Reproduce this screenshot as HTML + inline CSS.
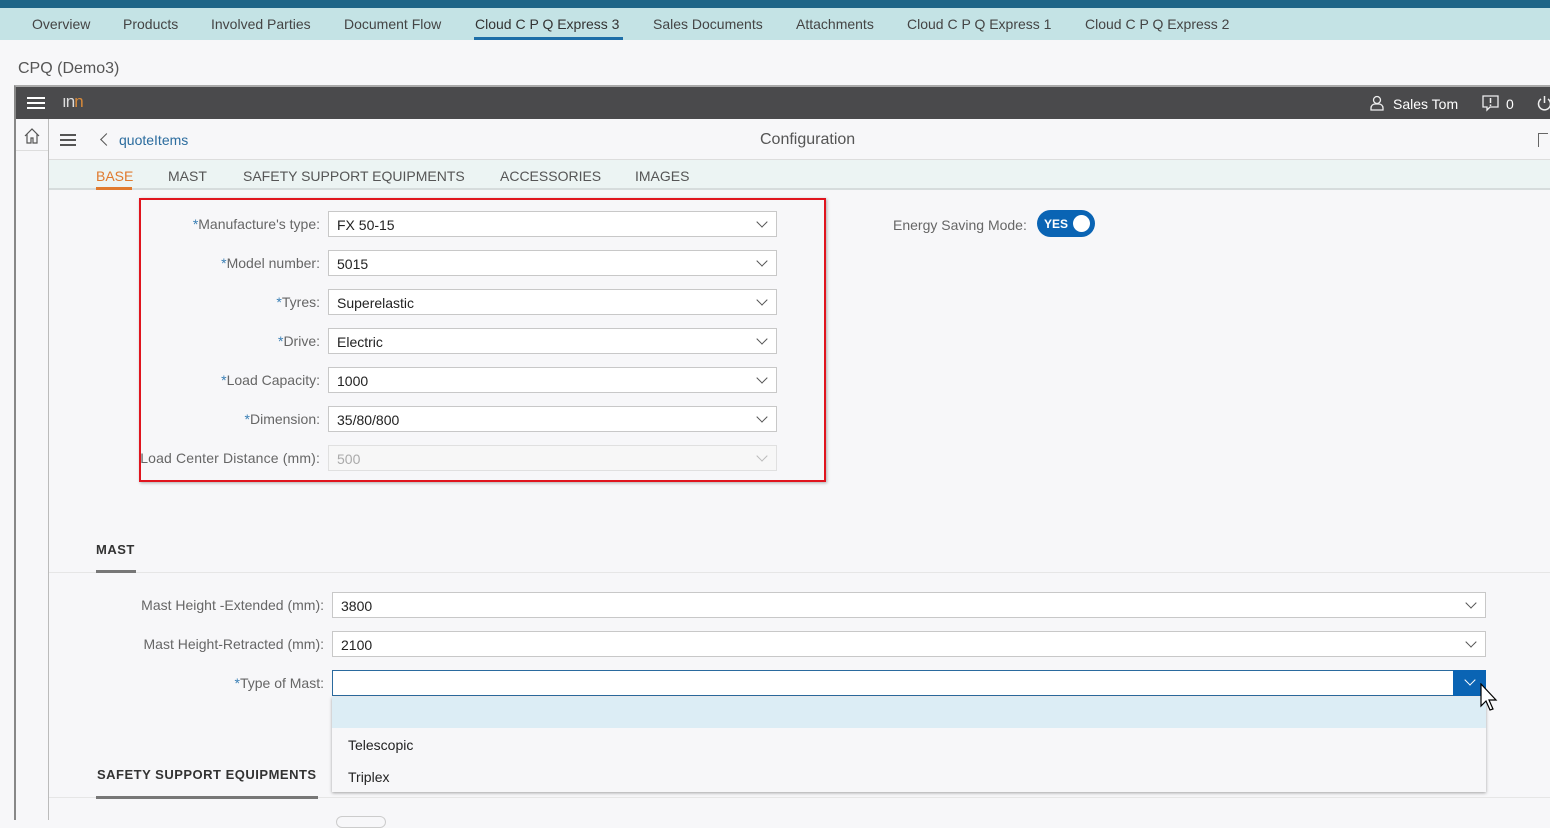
<!DOCTYPE html>
<html><head><meta charset="utf-8"><style>
*{box-sizing:border-box;margin:0;padding:0}
body{width:1550px;height:820px;overflow:hidden;background:#f7f7f9;font-family:"Liberation Sans",Arial,sans-serif;position:relative;color:#333}
.a{position:absolute}
.nav{left:0;top:0;width:1550px;height:8px;background:#1e6587}
.nav2{left:0;top:8px;width:1550px;height:32px;background:#c4e3e5;font-size:14px;color:#444}
.nav2 span{position:absolute;top:8px}
.lbl{font-size:14px;color:#666;text-align:right;white-space:nowrap}
.lbl b{color:#3a7fb5;font-weight:normal}
.inp{height:26px;border:1px solid #c8c8c8;background:#fff;font-size:14px;color:#222;padding:5px 8px}
.chev{position:absolute;right:10px;top:6px;width:8px;height:8px;border-right:1.3px solid #555;border-bottom:1.3px solid #555;transform:rotate(45deg)}
</style></head><body>
<div class="a nav"></div>
<div class="a nav2">
<span style="left:32px">Overview</span><span style="left:123px">Products</span><span style="left:211px">Involved Parties</span><span style="left:344px">Document Flow</span><span style="left:475px;color:#333">Cloud C P Q Express 3</span><span style="left:653px">Sales Documents</span><span style="left:796px">Attachments</span><span style="left:907px">Cloud C P Q Express 1</span><span style="left:1085px">Cloud C P Q Express 2</span>
<div class="a" style="left:474px;top:29px;width:149px;height:3px;background:#1e6fa8"></div>
</div>
<div class="a" style="left:18px;top:60px;font-size:16px;color:#555">CPQ (Demo3)</div>
<div class="a" style="left:14px;top:85px;width:1536px;height:735px;border-left:2px solid #888;border-top:2px solid #aaa"></div>
<div class="a" style="left:16px;top:87px;width:1534px;height:32px;background:#4a4a4c"></div>
<div class="a" style="left:27px;top:97px;width:18px;height:2px;background:#fff;box-shadow:0 5px 0 #fff,0 10px 0 #fff"></div>
<div class="a" style="left:62px;top:92px;font-size:17px;color:#ddd;letter-spacing:-1px">ın<span style="color:#d88a3a">n</span></div>
<svg class="a" style="left:1370px;top:95px" width="14" height="16"><circle cx="7" cy="5" r="3.5" fill="none" stroke="#eee" stroke-width="1.3"/><path d="M1 15v-2a4 4 0 0 1 4-4h4a4 4 0 0 1 4 4v2z" fill="none" stroke="#eee" stroke-width="1.3"/></svg>
<div class="a" style="left:1393px;top:96px;font-size:14px;color:#fff">Sales Tom</div>
<svg class="a" style="left:1482px;top:95px" width="18" height="17"><path d="M1 1h15v11h-8l-3 3v-3H1z" fill="none" stroke="#eee" stroke-width="1.3"/><path d="M8.5 3v5M8.5 9.5v1.5" stroke="#eee" stroke-width="1.5"/></svg>
<div class="a" style="left:1506px;top:96px;font-size:14px;color:#fff">0</div>
<svg class="a" style="left:1537px;top:94px" width="14" height="18"><path d="M4 5a6 6 0 1 0 7 0" fill="none" stroke="#eee" stroke-width="1.5"/><path d="M7.5 2v7" stroke="#eee" stroke-width="1.5"/></svg>
<div class="a" style="left:48px;top:119px;width:1px;height:701px;background:#bbb"></div>
<div class="a" style="left:16px;top:150px;width:32px;height:1px;background:#ddd"></div>
<svg class="a" style="left:23px;top:127px" width="18" height="18"><path d="M2 9L9 2l7 7M4 7v9h4v-5h2v5h4V7" fill="none" stroke="#555" stroke-width="1.2"/></svg>
<div class="a" style="left:49px;top:159px;width:1501px;height:1px;background:#ddd"></div>
<div class="a" style="left:60px;top:134px;width:16px;height:2px;background:#555;box-shadow:0 5px 0 #555,0 10px 0 #555"></div>
<div class="a" style="left:102px;top:135px;width:9px;height:9px;border-left:1.6px solid #555;border-bottom:1.6px solid #555;transform:rotate(45deg)"></div>
<div class="a" style="left:119px;top:132px;font-size:14px;color:#2b6c9e">quoteItems</div>
<div class="a" style="left:760px;top:131px;font-size:16px;color:#555">Configuration</div>
<div class="a" style="left:1538px;top:133px;width:10px;height:14px;border-left:1px solid #666;border-top:1px solid #666"></div>
<div class="a" style="left:49px;top:160px;width:1501px;height:30px;background:#ecf4f3;border-bottom:2px solid #d6dcdc;font-size:14px;color:#555">
<span class="a" style="left:47px;top:8px;color:#e07a2e">BASE</span><span class="a" style="left:119px;top:8px">MAST</span><span class="a" style="left:194px;top:8px">SAFETY SUPPORT EQUIPMENTS</span><span class="a" style="left:451px;top:8px">ACCESSORIES</span><span class="a" style="left:586px;top:8px">IMAGES</span>
<div class="a" style="left:47px;top:27px;width:36px;height:3px;background:#e07a2e"></div>
</div>

<div class="a lbl" style="left:100px;width:220px;top:216px"><b>*</b>Manufacture's type:</div>
<div class="a inp" style="left:328px;top:211px;width:449px">FX 50-15<i class="chev"></i></div>
<div class="a lbl" style="left:100px;width:220px;top:255px"><b>*</b>Model number:</div>
<div class="a inp" style="left:328px;top:250px;width:449px">5015<i class="chev"></i></div>
<div class="a lbl" style="left:100px;width:220px;top:294px"><b>*</b>Tyres:</div>
<div class="a inp" style="left:328px;top:289px;width:449px">Superelastic<i class="chev"></i></div>
<div class="a lbl" style="left:100px;width:220px;top:333px"><b>*</b>Drive:</div>
<div class="a inp" style="left:328px;top:328px;width:449px">Electric<i class="chev"></i></div>
<div class="a lbl" style="left:100px;width:220px;top:372px"><b>*</b>Load Capacity:</div>
<div class="a inp" style="left:328px;top:367px;width:449px">1000<i class="chev"></i></div>
<div class="a lbl" style="left:100px;width:220px;top:411px"><b>*</b>Dimension:</div>
<div class="a inp" style="left:328px;top:406px;width:449px">35/80/800<i class="chev"></i></div>
<div class="a lbl" style="left:100px;width:220px;top:450px;letter-spacing:0.15px">Load Center Distance (mm):</div>
<div class="a" style="left:100px;top:448px;width:41px;height:20px;background:#f7f7f9"></div>
<div class="a inp" style="left:328px;top:445px;width:449px;background:#f7f7f7;border-color:#e0e0e0;color:#aaa">500<i class="chev" style="border-color:#bbb"></i></div>
<div class="a" style="left:139px;top:198px;width:687px;height:284px;border:2px solid #e0141e;box-shadow:1px 1px 3px rgba(0,0,0,.3)"></div>

<div class="a lbl" style="left:893px;top:217px;text-align:left">Energy Saving Mode:</div>
<div class="a" style="left:1037px;top:210px;width:58px;height:27px;border-radius:14px;background:#0a64b4"></div>
<div class="a" style="left:1044px;top:217px;font-size:12px;font-weight:bold;color:#fff">YES</div>
<div class="a" style="left:1073px;top:215px;width:17px;height:17px;border-radius:50%;background:#fff"></div>

<div class="a" style="left:96px;top:542px;font-size:13px;font-weight:bold;color:#333;letter-spacing:.5px">MAST</div>
<div class="a" style="left:49px;top:572px;width:1501px;height:1px;background:#e6e6e6"></div>
<div class="a" style="left:96px;top:570px;width:40px;height:3px;background:#777"></div>
<div class="a lbl" style="left:100px;width:224px;top:597px">Mast Height -Extended (mm):</div>
<div class="a inp" style="left:332px;top:592px;width:1154px">3800<i class="chev"></i></div>
<div class="a lbl" style="left:100px;width:224px;top:636px">Mast Height-Retracted (mm):</div>
<div class="a inp" style="left:332px;top:631px;width:1154px">2100<i class="chev"></i></div>
<div class="a lbl" style="left:100px;width:224px;top:675px"><b>*</b>Type of Mast:</div>
<div class="a inp" style="left:332px;top:670px;width:1154px;border-color:#2a6a9e"></div>
<div class="a" style="left:1453px;top:670px;width:33px;height:26px;background:#0a64b4"><i class="chev" style="border-color:#fff;right:12px;top:6px"></i></div>
<div class="a" style="left:332px;top:697px;width:1154px;height:95px;background:#f7f7f9;box-shadow:0 1px 3px rgba(0,0,0,.35)">
<div style="height:31px;background:#dcedf5"></div>
<div class="a" style="left:16px;top:40px;font-size:14px;color:#222">Telescopic</div>
<div class="a" style="left:16px;top:72px;font-size:14px;color:#222">Triplex</div>
</div>
<svg class="a" style="left:1479px;top:683px" width="22" height="30"><path d="M2 1v22l5-5 4 9 3-1-4-9h7z" fill="#fff" stroke="#000" stroke-width="1.2"/></svg>
<div class="a" style="left:97px;top:767px;font-size:13px;font-weight:bold;color:#333;letter-spacing:.5px">SAFETY SUPPORT EQUIPMENTS</div>
<div class="a" style="left:49px;top:797px;width:1501px;height:1px;background:#e6e6e6"></div>
<div class="a" style="left:96px;top:796px;width:222px;height:3px;background:#777"></div>
<div class="a" style="left:336px;top:816px;width:50px;height:12px;border:1px solid #ccc;border-radius:12px"></div>
</body></html>
